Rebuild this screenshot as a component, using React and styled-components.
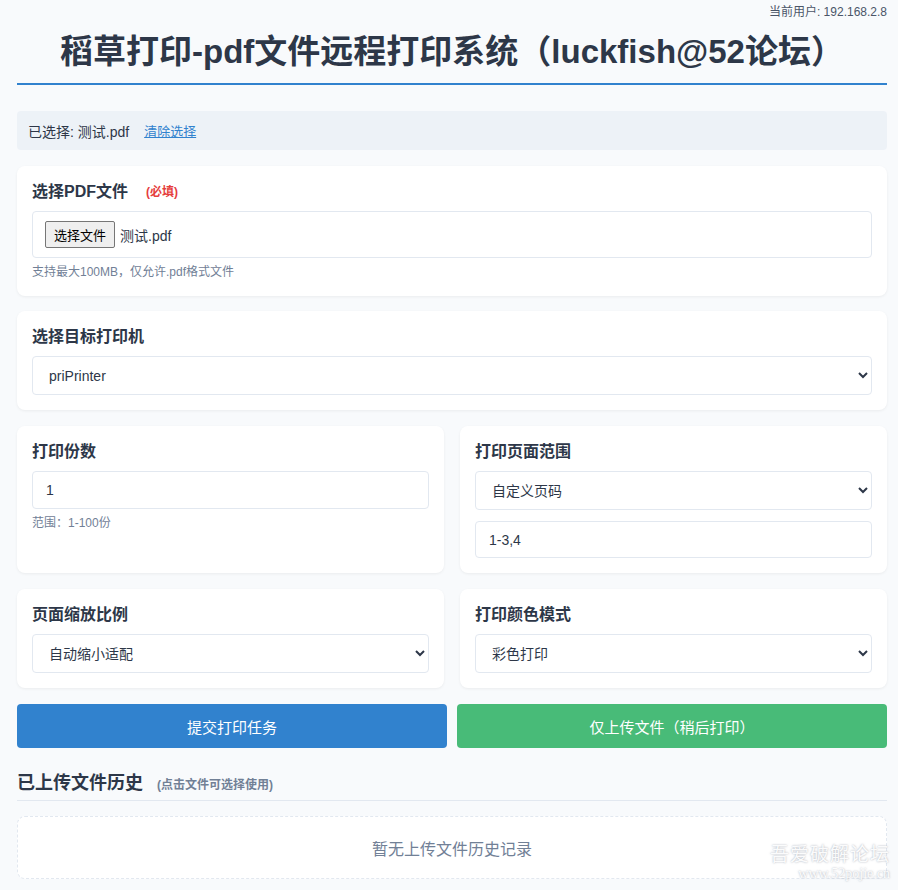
import React from "react";
import styled, { createGlobalStyle } from "styled-components";

const Global = createGlobalStyle`
  html, body { margin: 0; padding: 0; background: #f8fafc; }
  body {
    font-family: "Liberation Sans", "Noto Sans CJK SC", sans-serif;
    color: #2d3748;
  }
  * { box-sizing: border-box; }
`;

const Page = styled.div`
  padding: 0 11px 12px 17px;
  position: relative;
  min-height: 890px;
`;

const UserLine = styled.div`
  text-align: right;
  font-size: 12px;
  line-height: 16px;
  color: #4a5568;
  padding-top: 4px;
`;

const Header = styled.header`
  border-bottom: 2px solid #3182ce;
  padding: 11px 0 10px;
  margin-bottom: 26px;
`;

const Title = styled.h1`
  margin: 0;
  text-align: center;
  font-size: 33px;
  line-height: 42px;
  font-weight: 700;
  color: #2d3748;
`;

const SelectedBar = styled.div`
  background: #edf2f7;
  border-radius: 4px;
  height: 39px;
  display: flex;
  align-items: center;
  padding: 0 11px;
  font-size: 14px;
  margin-bottom: 16px;
`;

const ClearLink = styled.a`
  color: #3182ce;
  text-decoration: underline;
  font-size: 13px;
  margin-left: 15px;
  cursor: pointer;
`;

const Card = styled.section`
  background: #fff;
  border-radius: 8px;
  box-shadow: 0 1px 3px rgba(0, 0, 0, 0.06);
  padding: 15px;
  margin-bottom: ${(p) => p.$mb || 16}px;
`;

const Grid = styled.div`
  display: grid;
  grid-template-columns: 1fr 1fr;
  gap: 16px;
  margin-bottom: 16px;
  & > ${Card} { margin-bottom: 0; }
`;

const Label = styled.div`
  font-size: 16px;
  line-height: 22px;
  font-weight: 700;
  margin-bottom: 8px;
  display: flex;
  align-items: center;
`;

const Required = styled.span`
  color: #e53e3e;
  font-size: 12px;
  font-weight: 700;
  margin-left: 18px;
`;

const FileBox = styled.div`
  height: 47px;
  border: 1px solid #e2e8f0;
  border-radius: 4px;
  display: flex;
  align-items: center;
  padding: 0 12px;
  font-size: 14px;
`;

const FileButton = styled.button`
  font-family: inherit;
  font-size: 13px;
  padding: 0 8px;
  height: 27px;
  background: #efefef;
  border: 1px solid #767676;
  border-radius: 2px;
  color: #000;
  margin-right: 5px;
`;

const Hint = styled.div`
  font-size: 12px;
  line-height: 18px;
  color: #718096;
  margin-top: 5px;
`;

const Select = styled.select`
  width: 100%;
  height: 39px;
  border: 1px solid #e2e8f0;
  border-radius: 4px;
  background: #fff;
  font-family: inherit;
  font-size: 14px;
  color: #2d3748;
  padding: 0 12px;
  display: block;
`;

const Input = styled.input`
  width: 100%;
  height: ${(p) => p.$h || 38}px;
  border: 1px solid #e2e8f0;
  border-radius: 4px;
  background: #fff;
  font-family: inherit;
  font-size: 14px;
  color: #2d3748;
  padding: 0 13px;
  display: block;
  margin-top: ${(p) => p.$mt || 0}px;
`;

const Actions = styled.div`
  display: grid;
  grid-template-columns: 1fr 1fr;
  gap: 10px;
  margin-bottom: 22px;
`;

const ActionButton = styled.button`
  height: 44px;
  border: none;
  border-radius: 4px;
  background: ${(p) => p.$bg};
  color: #fff;
  font-family: inherit;
  font-size: 15px;
`;

const HistoryHead = styled.div`
  display: flex;
  align-items: baseline;
  border-bottom: 1px solid #e2e8f0;
  padding-bottom: 4px;
  margin-bottom: 15px;
`;

const HistoryTitle = styled.h2`
  margin: 0;
  font-size: 18px;
  line-height: 26px;
  font-weight: 700;
`;

const HistoryNote = styled.span`
  font-size: 12px;
  font-weight: 700;
  color: #718096;
  margin-left: 14px;
`;

const Empty = styled.div`
  border: 1px dashed #e2e8f0;
  border-radius: 8px;
  background: #fff;
  height: 63px;
  display: flex;
  align-items: center;
  justify-content: center;
  font-size: 16px;
  color: #718096;
`;

const Watermark = styled.div`
  position: absolute;
  right: 8px;
  bottom: 10px;
  text-align: right;
  color: rgba(255, 255, 255, 0.95);
  text-shadow: 0 0 2px rgba(100, 110, 130, 0.6);
  pointer-events: none;
  display: flex;
  flex-direction: column;
  gap: 3px;
`;

const WmBig = styled.div`
  font-family: "Noto Sans CJK SC", sans-serif;
  font-size: 19px;
  line-height: 21px;
  letter-spacing: 1px;
`;

const WmSmall = styled.div`
  font-family: "Liberation Serif", serif;
  font-size: 14px;
  line-height: 15px;
`;

export default function App() {
  return (
    <>
      <Global />
      <Page>
        <UserLine>当前用户: 192.168.2.8</UserLine>
        <Header>
          <Title>稻草打印-pdf文件远程打印系统（luckfish@52论坛）</Title>
        </Header>

        <SelectedBar>
          已选择: 测试.pdf
          <ClearLink>清除选择</ClearLink>
        </SelectedBar>

        <Card $mb={15}>
          <Label>
            选择PDF文件<Required>(必填)</Required>
          </Label>
          <FileBox>
            <FileButton>选择文件</FileButton>
            测试.pdf
          </FileBox>
          <Hint>支持最大100MB，仅允许.pdf格式文件</Hint>
        </Card>

        <Card>
          <Label>选择目标打印机</Label>
          <Select defaultValue="priPrinter">
            <option>priPrinter</option>
          </Select>
        </Card>

        <Grid>
          <Card>
            <Label>打印份数</Label>
            <Input defaultValue="1" />
            <Hint>范围：1-100份</Hint>
          </Card>
          <Card>
            <Label>打印页面范围</Label>
            <Select defaultValue="custom">
              <option value="custom">自定义页码</option>
            </Select>
            <Input defaultValue="1-3,4" $mt={11} $h={37} />
          </Card>
        </Grid>

        <Grid>
          <Card>
            <Label>页面缩放比例</Label>
            <Select defaultValue="auto">
              <option value="auto">自动缩小适配</option>
            </Select>
          </Card>
          <Card>
            <Label>打印颜色模式</Label>
            <Select defaultValue="color">
              <option value="color">彩色打印</option>
            </Select>
          </Card>
        </Grid>

        <Actions>
          <ActionButton $bg="#3182ce">提交打印任务</ActionButton>
          <ActionButton $bg="#48bb78">仅上传文件（稍后打印）</ActionButton>
        </Actions>

        <HistoryHead>
          <HistoryTitle>已上传文件历史</HistoryTitle>
          <HistoryNote>(点击文件可选择使用)</HistoryNote>
        </HistoryHead>
        <Empty>暂无上传文件历史记录</Empty>

        <Watermark>
          <WmBig>吾爱破解论坛</WmBig>
          <WmSmall>www.52pojie.cn</WmSmall>
        </Watermark>
      </Page>
    </>
  );
}
